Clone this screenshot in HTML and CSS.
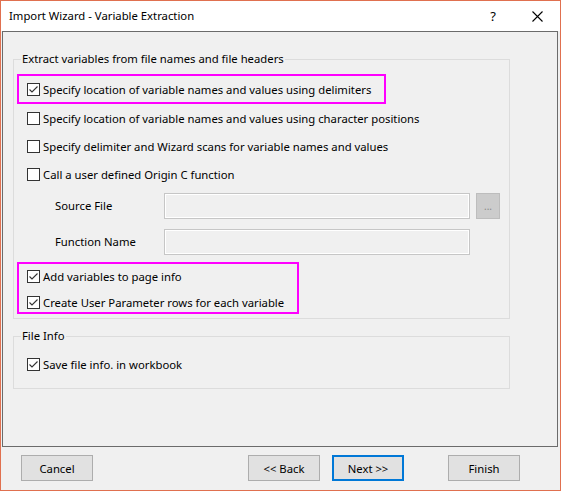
FILE: index.html
```html
<!DOCTYPE html>
<html>
<head>
<meta charset="utf-8">
<link rel="stylesheet" href="styles.css">
</head>
<body>
<div class="window">
  <div class="titlebar">
    <span class="title">Import Wizard - Variable Extraction</span>
    <span class="help">?</span>
    <svg class="close" width="11" height="11" viewBox="0 0 11 11"><path d="M0.5 0.5 L10.5 10.5 M10.5 0.5 L0.5 10.5" stroke="#000" stroke-width="1.1" fill="none"/></svg>
  </div>
  <div class="panel">
    <fieldset class="group group-extract">
      <legend>Extract variables from file names and file headers</legend>
      <div class="hl hl-one">
        <div class="row"><span class="cb checked"></span><span>Specify location of variable names and values using delimiters</span></div>
      </div>
      <div class="row"><span class="cb"></span><span>Specify location of variable names and values using character positions</span></div>
      <div class="row"><span class="cb"></span><span>Specify delimiter and Wizard scans for variable names and values</span></div>
      <div class="row"><span class="cb"></span><span>Call a user defined Origin C function</span></div>
      <div class="field field-first">
        <span class="flabel">Source File</span>
        <span class="input"></span>
        <span class="browse">...</span>
      </div>
      <div class="field">
        <span class="flabel">Function Name</span>
        <span class="input"></span>
      </div>
      <div class="hl hl-two">
        <div class="row"><span class="cb checked"></span><span>Add variables to page info</span></div>
        <div class="row"><span class="cb checked"></span><span>Create User Parameter rows for each variable</span></div>
      </div>
    </fieldset>
    <fieldset class="group group-file">
      <legend>File Info</legend>
      <div class="row"><span class="cb checked"></span><span>Save file info. in workbook</span></div>
    </fieldset>
  </div>
  <div class="buttons">
    <span class="btn">Cancel</span>
    <span class="btn btn-back">&lt;&lt; Back</span>
    <span class="btn btn-next">Next &gt;&gt;</span>
    <span class="btn btn-finish">Finish</span>
  </div>
</div>
</body>
</html>
```
FILE: styles.css
```css
* { box-sizing: border-box; }
html, body { margin: 0; padding: 0; }
body {
  width: 561px;
  height: 491px;
  font-family: "Noto Sans", "Open Sans", sans-serif;
  font-size: 11.3px;
  color: #000;
  background: #f0f0f0;
}
.window {
  width: 561px;
  height: 491px;
  border: 1px solid #e0704f;
  background: #f0f0f0;
}
.titlebar {
  height: 30px;
  background: #fff;
  display: flex;
  align-items: center;
  padding-left: 8px;
}
.title { flex: 1; font-size: 11.3px; margin-top: -1px; }
.help { font-size: 13px; margin-right: 36px; }
.close { margin-right: 17px; }
.panel {
  margin-left: 1px;
  width: 556px;
  height: 416px;
  border: 1px solid #6b6b6b;
  padding: 19px 0 0 10px;
}
.group {
  margin: 0;
  padding: 0;
  width: 497px;
  border: 1px solid #dcdcdc;
  min-width: 0;
}
.group legend {
  margin-left: 7px;
  padding: 0 1px;
  line-height: 16px;
  height: 16px;
}
.group-extract { height: 268px; }
.group-file { margin-top: 9px; height: 61px; }
.row {
  height: 28px;
  display: flex;
  align-items: center;
  padding-left: 13px;
  white-space: nowrap;
}
.cb {
  width: 13px;
  height: 13px;
  border: 1px solid #333;
  background: #fff;
  margin-right: 3px;
  flex: none;
}
.cb.checked {
  background: #fff url("data:image/svg+xml;utf8,<svg xmlns='http://www.w3.org/2000/svg' width='11' height='11' viewBox='0 0 11 11'><path d='M1.5 5.5 L4 8 L9.5 2.5' stroke='%23333' stroke-width='1.1' fill='none'/></svg>") no-repeat center;
}
.hl {
  border: 2px solid #ff00ff;
  margin-left: 3px;
}
.hl .row { padding-left: 8px; }
.hl-one { width: 369px; height: 30px; margin-top: 7px; }
.hl-one .row { height: 26px; }
.hl-two { width: 282px; height: 52px; margin-top: 7px; }
.hl-two .row { height: 24px; }
.hl-two .row + .row { height: 28px; }
.field {
  display: flex;
  align-items: center;
  height: 26px;
  margin-top: 10px;
}
.field-first { margin-top: 5px; }
.flabel { width: 150px; padding-left: 41px; padding-bottom: 2px; white-space: nowrap; }
.input {
  width: 306px;
  height: 26px;
  border: 1px solid #c6c6c6;
  box-shadow: inset 0 0 0 1px #fff;
  background: #f0f0f0;
}
.browse {
  width: 24px;
  height: 26px;
  margin-left: 6px;
  background: #cccccc;
  border: 1px solid #bdbdbd;
  color: #8a8a8a;
  font-size: 10px;
  display: flex;
  align-items: center;
  justify-content: center;
  letter-spacing: 0;
}
.group-file .row { margin-top: 6px; }
.buttons {
  display: flex;
  padding: 8px 40px 0 20px;
}
.btn {
  width: 72px;
  height: 26px;
  background: #e1e1e1;
  border: 1px solid #adadad;
  display: flex;
  align-items: center;
  justify-content: center;
}
.btn-back { margin-left: auto; }
.btn-next { margin-left: 12px; border: 2px solid #0078d7; }
.btn-finish { margin-left: 44px; }
```
